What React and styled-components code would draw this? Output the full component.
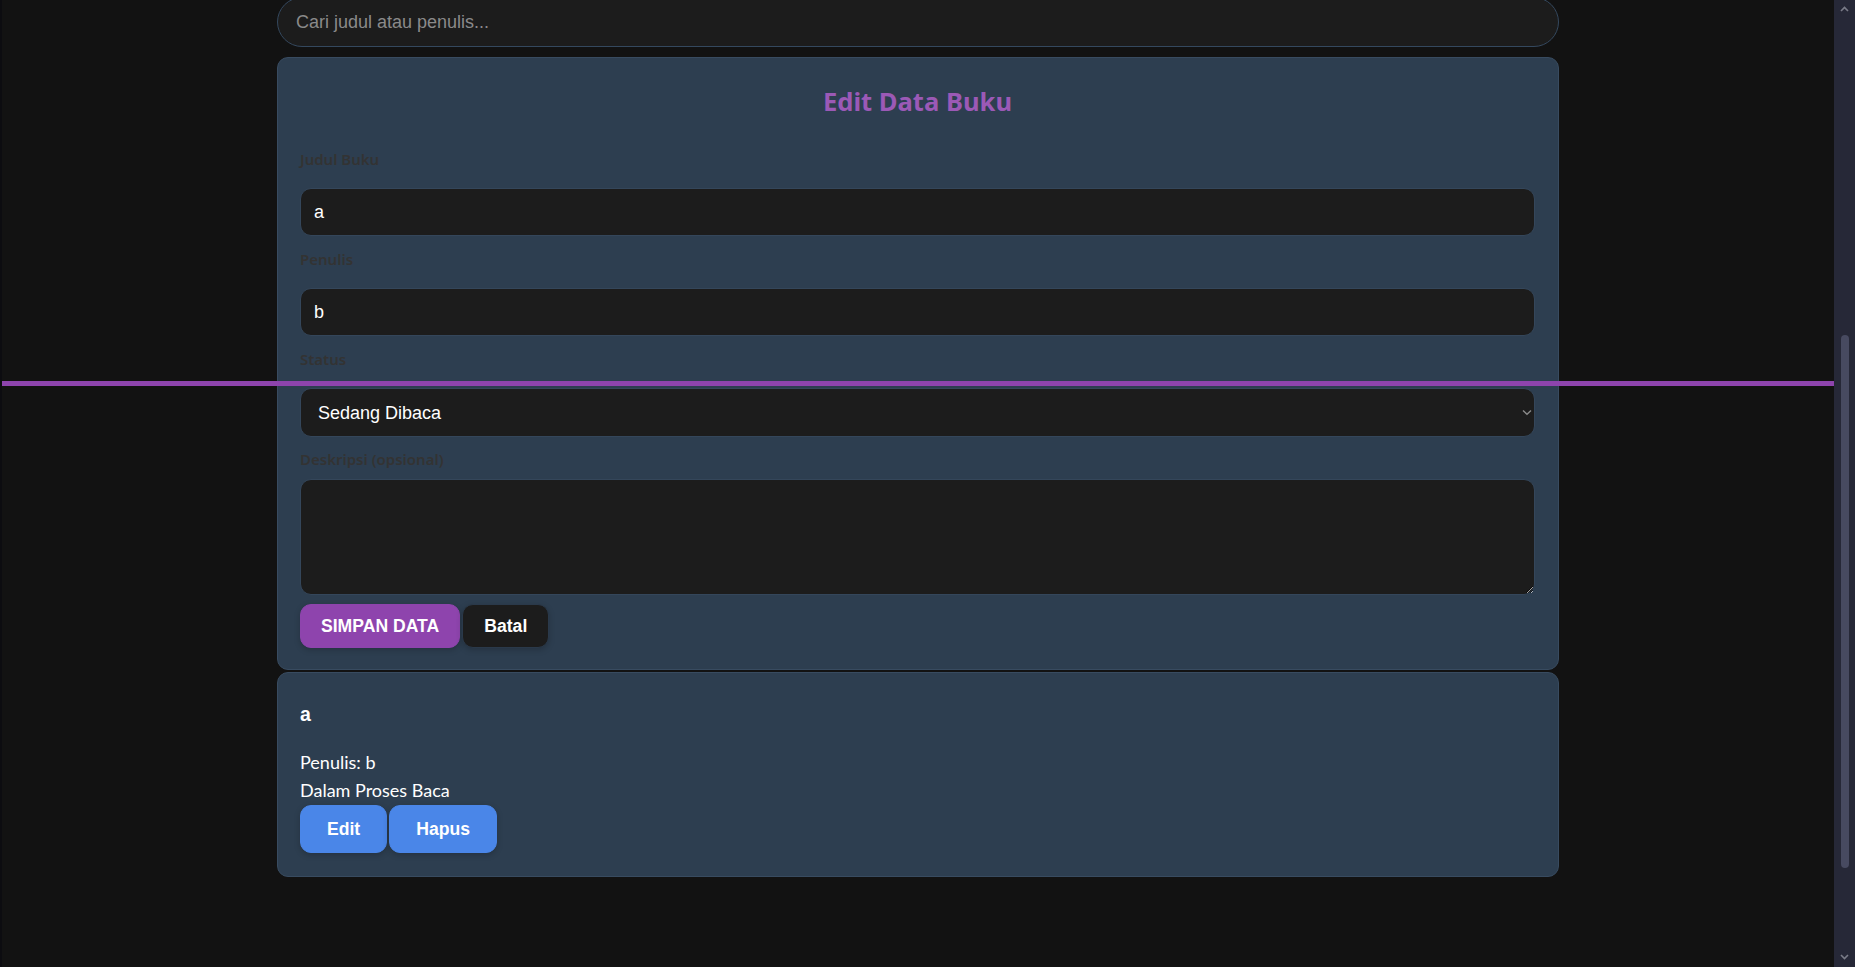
import React from "react";
import styled, { createGlobalStyle } from "styled-components";

const GlobalStyle = createGlobalStyle`
  html, body {
    margin: 0;
    padding: 0;
    background: #121212;
    overflow: hidden;
  }
  * {
    box-sizing: border-box;
  }
`;

const Screen = styled.div`
  display: flex;
  width: 100vw;
  height: 967px;
  background: #121212;
`;

const Viewport = styled.main`
  flex: 1;
  height: 100%;
  overflow: hidden;
  border-left: 2px solid #0c0c10;
`;

const Column = styled.div`
  width: 1282px;
  margin: -3px auto 0;
  display: flex;
  flex-direction: column;
`;

const SearchInput = styled.input`
  height: 50px;
  width: 100%;
  margin-bottom: 10px;
  padding: 0 18px;
  border: 1px solid #34485e;
  border-radius: 25px;
  background: #1c1c1c;
  color: #fff;
  font-family: Arial, "Liberation Sans", sans-serif;
  font-size: 18px;
  outline: none;

  &::placeholder {
    color: #8a8a8a;
  }
`;

const Card = styled.section`
  background: #2d3e50;
  border: 1px solid #384b60;
  border-radius: 11px;
  padding: ${(p) => p.$pad};
  margin-bottom: 2px;
`;

const Title = styled.h2`
  margin: 7px 0 29px;
  height: 36px;
  line-height: 36px;
  text-align: center;
  color: #9b59b6;
  font-family: "Noto Sans", sans-serif;
  font-size: 25.6px;
  font-weight: 700;
`;

const Label = styled.label`
  display: block;
  height: 20px;
  line-height: 20px;
  margin-bottom: ${(p) => p.$gap}px;
  color: #333;
  font-family: "Noto Sans", sans-serif;
  font-size: 15px;
  font-weight: 600;
`;

const fieldBase = `
  display: block;
  width: 100%;
  border: 1px solid #34465a;
  border-radius: 11px;
  background: #1c1c1c;
  color: #fff;
  font-family: Arial, "Liberation Sans", sans-serif;
  font-size: 18px;
  outline: none;
`;

const TextInput = styled.input`
  ${fieldBase}
  height: 48px;
  padding: 0 13px;
  margin-bottom: 13px;
`;

const SelectWrap = styled.div`
  position: relative;
  margin-bottom: 12px;
`;

const Select = styled.select`
  ${fieldBase}
  appearance: none;
  height: 49px;
  padding: 0 30px 0 17px;
`;

const SelectChevron = styled.svg`
  position: absolute;
  right: 3px;
  top: 21px;
  width: 10px;
  height: 7px;
  pointer-events: none;
`;

const TextArea = styled.textarea`
  ${fieldBase}
  height: 116px;
  padding: 13px;
  margin-bottom: 9px;
  resize: vertical;
`;

const ButtonRow = styled.div`
  display: flex;
  gap: 2px;
`;

const Button = styled.button`
  height: ${(p) => p.$h}px;
  padding: 0 ${(p) => p.$px}px;
  border: 1px solid ${(p) => p.$border || p.$bg};
  border-radius: 11px;
  background: ${(p) => p.$bg};
  color: #fff;
  font-family: Arial, "Liberation Sans", sans-serif;
  font-size: 17.6px;
  font-weight: 700;
  box-shadow: 0 2px 6px rgba(0, 0, 0, 0.2);
  cursor: pointer;
`;

const BookTitle = styled.h3`
  margin: 10px 0 23px;
  height: 22px;
  line-height: 22px;
  color: #fff;
  font-family: Arial, "Liberation Sans", sans-serif;
  font-size: 19.5px;
  font-weight: 700;
`;

const Meta = styled.p`
  margin: 0;
  line-height: 28px;
  color: #fff;
  font-family: Lato, "Noto Sans", sans-serif;
  font-size: 18px;
`;

const ItemButtons = styled(ButtonRow)`
  margin-top: 1px;
`;

const ScrollTrack = styled.div`
  width: 21px;
  height: 100%;
  background: #262837;
  display: flex;
  flex-direction: column;
  align-items: center;
`;

const ScrollArrow = styled.svg`
  width: 9px;
  height: 6px;
  margin: ${(p) => p.$m};
`;

const ScrollThumb = styled.div`
  width: 8px;
  height: 533px;
  margin-top: 323px;
  border-radius: 4px;
  background: #474a60;
`;

const Spacer = styled.div`
  flex: 1;
`;

const Divider = styled.div`
  position: fixed;
  top: 381px;
  left: 2px;
  right: 21px;
  height: 5px;
  background: #8e44ad;
`;

export default function App() {
  return (
    <>
      <GlobalStyle />
      <Screen>
        <Viewport>
          <Column>
            <SearchInput placeholder="Cari judul atau penulis..." />

            <Card $pad="19px 23px 21px 22px">
              <Title>Edit Data Buku</Title>

              <Label $gap={19}>Judul Buku</Label>
              <TextInput defaultValue="a" />

              <Label $gap={19}>Penulis</Label>
              <TextInput defaultValue="b" />

              <Label $gap={19}>Status</Label>
              <SelectWrap>
                <Select defaultValue="baca">
                  <option value="belum">Belum Dibaca</option>
                  <option value="baca">Sedang Dibaca</option>
                  <option value="selesai">Selesai Dibaca</option>
                </Select>
                <SelectChevron viewBox="0 0 10 7">
                  <path d="M1 1.5 L5 5.2 L9 1.5" fill="none" stroke="#8a8a8a" strokeWidth="1.4" />
                </SelectChevron>
              </SelectWrap>

              <Label $gap={10}>Deskripsi (opsional)</Label>
              <TextArea />

              <ButtonRow>
                <Button $h={44} $px={20} $bg="#8e44ad">SIMPAN DATA</Button>
                <Button $h={44} $px={21} $bg="#1c1c1c" $border="#2a394a">Batal</Button>
              </ButtonRow>
            </Card>

            <Card $pad="20px 23px 23px 22px">
              <BookTitle>a</BookTitle>
              <Meta>Penulis: b</Meta>
              <Meta>Dalam Proses Baca</Meta>
              <ItemButtons>
                <Button $h={48} $px={26} $bg="#4a86e8">Edit</Button>
                <Button $h={48} $px={26} $bg="#4a86e8">Hapus</Button>
              </ItemButtons>
            </Card>
          </Column>
        </Viewport>

        <ScrollTrack>
          <ScrollArrow viewBox="0 0 9 6" $m="6px 0 0">
            <path d="M1 5 L4.5 1.5 L8 5" fill="none" stroke="#7a7c88" strokeWidth="1.6" />
          </ScrollArrow>
          <ScrollThumb />
          <Spacer />
          <ScrollArrow viewBox="0 0 9 6" $m="0 0 7px">
            <path d="M1 1 L4.5 4.5 L8 1" fill="none" stroke="#7a7c88" strokeWidth="1.6" />
          </ScrollArrow>
        </ScrollTrack>
      </Screen>
      <Divider />
    </>
  );
}
